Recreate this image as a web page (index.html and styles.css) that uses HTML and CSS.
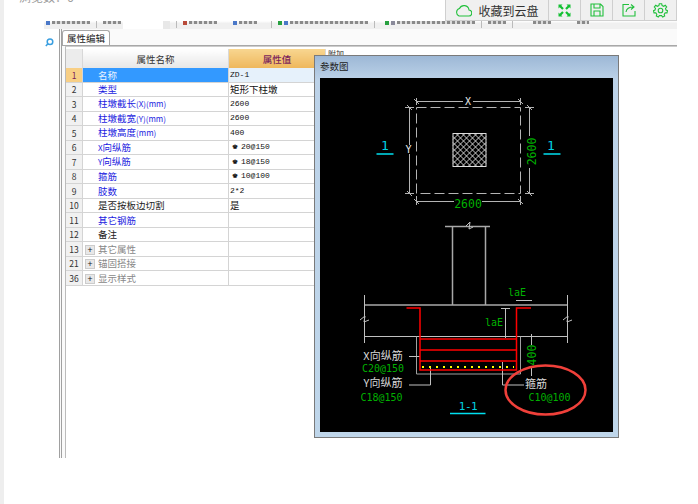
FILE: index.html
```html
<!DOCTYPE html>
<html lang="zh-CN">
<head>
    <meta charset="UTF-8">
    <title>属性编辑</title>
    <link rel="stylesheet" href="styles.css">
</head>
<body>
    <div class="strip"></div>
    <div class="page">
        <div class="views">浏览数：6</div>

        <div class="shot">
            <div class="toolbar">
                <i class="tb-icon blue"></i><span class="tb-text w1"></span>
                <i class="tb-sep"></i><span class="tb-text w2"></span>
                <span class="tb-input"></span><span class="tb-drop"></span>
                <i class="tb-sep"></i><i class="tb-icon red"></i><span class="tb-text w3"></span>
                <i class="tb-icon blue m1"></i><span class="tb-text w2"></span>
                <i class="tb-sep m2"></i><i class="tb-icon green"></i><i class="tb-icon blue"></i><span class="tb-text w4"></span>
                <i class="tb-sep"></i><i class="tb-icon green m3"></i><i class="tb-icon gray"></i><span class="tb-text w4"></span>
                <i class="tb-sep"></i><span class="tb-text w2"></span>
                <i class="tb-sep"></i><span class="tb-text w2 m4"></span><span class="tb-text w5 m5"></span>
            </div>
            <div class="work">
                <div class="side">
                    <svg class="search" width="9" height="9" viewBox="0 0 9 9">
                        <circle cx="5" cy="3.7" r="2.8" fill="none" stroke="#3a9fe0" stroke-width="1.5"/>
                        <path d="M3 5.8 L0.8 8" stroke="#3a9fe0" stroke-width="1.6"/>
                    </svg>
                </div>
                <div class="panel">
                    <div class="tabs"><div class="tab">属性编辑</div></div>
                    <div class="grid-wrap">
                        <table class="grid">
                            <thead>
                                <tr><th class="no"></th><th class="name">属性名称</th><th class="val">属性值</th><th class="extra">附加</th></tr>
                            </thead>
                            <tbody>
                                <tr class="sel"><td class="no">1</td><td class="name">名称</td><td class="val">ZD-1</td><td></td></tr>
                                <tr><td class="no">2</td><td class="name blue">类型</td><td class="val cn">矩形下柱墩</td><td></td></tr>
                                <tr><td class="no">3</td><td class="name blue">柱墩截长<small>(X)(mm)</small></td><td class="val">2600</td><td></td></tr>
                                <tr><td class="no">4</td><td class="name blue">柱墩截宽<small>(Y)(mm)</small></td><td class="val">2600</td><td></td></tr>
                                <tr><td class="no">5</td><td class="name blue">柱墩高度<small>(mm)</small></td><td class="val">400</td><td></td></tr>
                                <tr><td class="no">6</td><td class="name blue"><small>X</small>向纵筋</td><td class="val"><b class="steel">♚</b>20@150</td><td></td></tr>
                                <tr><td class="no">7</td><td class="name blue"><small>Y</small>向纵筋</td><td class="val"><b class="steel">♚</b>18@150</td><td></td></tr>
                                <tr><td class="no">8</td><td class="name blue">箍筋</td><td class="val"><b class="steel">♚</b>10@100</td><td></td></tr>
                                <tr><td class="no">9</td><td class="name blue">肢数</td><td class="val">2*2</td><td></td></tr>
                                <tr><td class="no">10</td><td class="name">是否按板边切割</td><td class="val cn">是</td><td></td></tr>
                                <tr><td class="no">11</td><td class="name blue">其它钢筋</td><td class="val"></td><td></td></tr>
                                <tr><td class="no">12</td><td class="name">备注</td><td class="val"></td><td></td></tr>
                                <tr><td class="no">13</td><td class="name gray"><i class="plus">+</i>其它属性</td><td class="val"></td><td></td></tr>
                                <tr><td class="no">21</td><td class="name gray"><i class="plus">+</i>锚固搭接</td><td class="val"></td><td></td></tr>
                                <tr><td class="no">36</td><td class="name gray"><i class="plus">+</i>显示样式</td><td class="val"></td><td></td></tr>
                            </tbody>
                        </table>
                    </div>
                </div>
            </div>

            <div class="dialog">
                <div class="dialog-title">参数图</div>
                <svg class="drawing" width="293" height="354" viewBox="320 78 293 354">
                    <!-- plan -->
                    <g fill="none" stroke="#b4b4b4">
                        <rect x="416.5" y="107.5" width="104" height="86" stroke-dasharray="10 4"/>
                        <path d="M416.5 98 V105 M520.5 98 V105 M416.5 101.5 H520.5"/>
                        <path d="M405 107.5 H414 M405 193.5 H414 M409.5 107.5 V193.5"/>
                        <path d="M525 107.5 H534 M525 193.5 H534 M529.5 107.5 V136 M529.5 168 V193.5"/>
                        <path d="M416.5 196 V205 M520.5 196 V205 M416.5 201.5 H454 M482 201.5 H520.5"/>
                        <path d="M414 99 L419 104 M518 99 L523 104 M407 105 L412 110 M407 191 L412 196 M527 105 L532 110 M527 191 L532 196 M414 199 L419 204 M518 199 L523 204"/>
                    </g>
                    <g fill="#000" stroke="none">
                        <rect x="463" y="97" width="10" height="9"/>
                        <rect x="404" y="145" width="10" height="9"/>
                    </g>
                    <rect x="453" y="133.500" width="33" height="33" fill="#000" stroke="#ddd"/>
                    <path class="hatch" d="M453 139.500 L459 133.500 M453 145.500 L465 133.500 M453 151.500 L471 133.500 M453 157.500 L477 133.500 M453 163.500 L483 133.500 M456 166.500 L486 136.500 M462 166.500 L486 142.500 M468 166.500 L486 148.500 M474 166.500 L486 154.500 M480 166.500 L486 160.500 M459 166.500 L453 160.500 M465 166.500 L453 154.500 M471 166.500 L453 148.500 M477 166.500 L453 142.500 M483 166.500 L453 136.500 M486 163.500 L456 133.500 M486 157.500 L462 133.500 M486 151.500 L468 133.500 M486 145.500 L474 133.500 M486 139.500 L480 133.500"/>
                    <text class="dim white" x="468" y="105" text-anchor="middle">X</text>
                    <text class="dim white" x="408.500" y="153" text-anchor="middle">Y</text>
                    <text class="dim green mid" x="468" y="207.500" text-anchor="middle">2600</text>
                    <text class="dim green mid" transform="translate(535.500 151.500) rotate(-90)" text-anchor="middle">2600</text>
                    <text class="dim cyan big" x="385" y="150" text-anchor="middle">1</text>
                    <text class="dim cyan big" x="551" y="150" text-anchor="middle">1</text>
                    <path d="M376.500 154 H393.500 M543.500 154 H560.500" stroke="#00e0f0" stroke-width="1.500"/>

                    <!-- section -->
                    <g fill="none" stroke="#a8a8a8" stroke-width="1.500">
                        <path d="M445 226.500 H490 M452.500 226.500 V305 M485.500 226.500 V305"/>
                        <path d="M364.500 305 H567.500"/>
                    </g>
                    <g fill="none" stroke="#c0c0c0">
                        <path d="M364.500 295 V343 M567.500 295 V343"/>
                        <path d="M360 320 L365 316 L364 322 L369 320 M563 320 L568 316 L567 322 L572 320 M466 226 L470 222 L469 229 L473 227"/>
                        <path d="M364.500 336.500 H567.500"/>
                        <path d="M416.500 336.500 V374 H520.500 V336.500" stroke="#a0a0a0"/>
                        <path d="M409 356.500 H420 M409 385 H430.500 V368 M502.500 362 V385 H524"/>
                        <path d="M516 300.500 H532 M505.500 308 V338 M501 308.500 H510 M531.500 334 V345 M531.500 366 V376"/>
                    </g>
                    <g fill="none" stroke="#ff0000" stroke-width="1.500">
                        <path d="M406.500 308 H420 V370 H516.500 V308 H531"/>
                        <path d="M420 339 H516.500 M420 350 H516.500 M420 361 H516.500"/>
                    </g>
                    <path d="M422 367 H514" stroke="#ffff00" stroke-width="2" stroke-dasharray="2 5"/>

                    <text class="label" x="383" y="360" text-anchor="middle">X向纵筋</text>
                    <text class="dim green" x="383" y="372" text-anchor="middle">C20@150</text>
                    <text class="label" x="383" y="387" text-anchor="middle">Y向纵筋</text>
                    <text class="dim green" x="381.500" y="401" text-anchor="middle">C18@150</text>
                    <text class="dim cyan tight" x="468" y="410" text-anchor="middle">1-1</text>
                    <path d="M450 413.500 H485.500" stroke="#00e0f0" stroke-width="1.500"/>
                    <text class="label" x="536" y="388" text-anchor="middle">箍筋</text>
                    <text class="dim green" x="549.500" y="401" text-anchor="middle">C10@100</text>
                    <text class="dim green" x="517" y="296" text-anchor="middle">laE</text>
                    <text class="dim green" x="494" y="326" text-anchor="middle">laE</text>
                    <text class="dim green mid" transform="translate(535.500 355) rotate(-90)" text-anchor="middle">400</text>
                    <ellipse cx="545.500" cy="390" rx="40" ry="24.500" fill="none" stroke="#f0403a" stroke-width="2.500"/>
                </svg>
            </div>
        </div>

        <div class="actions">
            <button class="act act-wide">
                <svg width="17" height="13" viewBox="0 0 17 13"><path d="M4 12 H13.500 A3 3 0 0 0 14 6 A5 5 0 0 0 4.500 4.500 A4 4 0 0 0 4 12 Z" fill="none" stroke="#22c03c" stroke-width="1.100"/></svg>
                收藏到云盘
            </button>
            <button class="act">
                <svg width="13" height="13" viewBox="0 0 13 13"><path d="M0.500 0.500 H4.500 L3.300 1.700 L5.800 4.200 L4.200 5.800 L1.700 3.300 L0.500 4.500 Z M12.500 0.500 V4.500 L11.300 3.300 L8.800 5.800 L7.200 4.200 L9.700 1.700 L8.500 0.500 Z M0.500 12.500 V8.500 L1.700 9.700 L4.200 7.200 L5.800 8.800 L3.300 11.300 L4.500 12.500 Z M12.500 12.500 H8.500 L9.700 11.300 L7.200 8.800 L8.800 7.200 L11.300 9.700 L12.500 8.500 Z" fill="#12c032"/></svg>
            </button>
            <button class="act">
                <svg width="14" height="14" viewBox="0 0 14 14"><path d="M1 1 H10.500 L13 3.500 V13 H1 Z M4 1 V5 H10 V1 M4 13 V8 H10 V13" fill="none" stroke="#22c03c" stroke-width="1.100"/></svg>
            </button>
            <button class="act">
                <svg width="14" height="14" viewBox="0 0 14 14"><path d="M7 1.500 H1 V13 H13 V8 M4 9 C4.500 5.500 7 4 11.500 4 M9 1.500 L12 4 L9 6.500" fill="none" stroke="#22c03c" stroke-width="1.100"/></svg>
            </button>
            <button class="act">
                <svg width="15" height="15" viewBox="0 0 15 15"><circle cx="7.500" cy="7.500" r="2.300" fill="none" stroke="#22c03c" stroke-width="1.100"/><path d="M6.300 0.800 H8.700 L9.100 2.600 L10.700 3.300 L12.300 2.300 L13.700 4 L12.500 5.400 L13 7 L14.500 7.700 L14 9.900 L12.200 9.900 L11.200 11.300 L11.700 13 L9.700 14 L8.600 12.600 H6.400 L5.300 14 L3.300 13 L3.800 11.300 L2.800 9.900 L1 9.900 L0.500 7.700 L2 7 L2.500 5.400 L1.300 4 L2.700 2.300 L4.300 3.300 L5.900 2.600 Z" fill="none" stroke="#22c03c" stroke-width="1.100"/></svg>
            </button>
        </div>
    </div>
</body>
</html>
```

FILE: styles.css
```css
body {
    margin: 0;
    background: white;
    font-family: "Noto Sans CJK SC", "Liberation Sans", sans-serif;
    display: flex;
    height: 504px;
    overflow: hidden;
}
.strip {
    width: 4px;
    background: #eeeeee;
}
.page {
    position: relative;
    flex: 1;
}
.views {
    height: 26px;
    margin-left: 15px;
    margin-top: -12px;
    font-size: 12px;
    color: #999;
    line-height: 18px;
}

/* 截图部分 */
.shot {
    position: relative;
    width: 633px;
    height: 437px;
    margin-top: 7px;
    margin-left: 40px;
    display: flex;
    flex-direction: column;
}
.toolbar {
    height: 8px;
    overflow: hidden;
    background: linear-gradient(white 0, #f0f0f0 30%, #f0f0f0 100%);
    display: flex;
    align-items: flex-start;
    gap: 2px;
    padding-left: 2px;
    filter: blur(0.6px);
}
.tb-text {
    height: 3px;
    overflow: hidden;
    background: repeating-linear-gradient(90deg, #8a8a8a 0, #8a8a8a 3px, #dcdcdc 3px, #dcdcdc 5px);
    flex: none;
}
.w1 { width: 38px; }
.w2 { width: 18px; }
.w3 { width: 28px; }
.w4 { width: 78px; }
.w5 { width: 12px; }
.tb-icon {
    width: 4px;
    height: 4px;
    flex: none;
}
.tb-icon.blue { background: #4a78c8; }
.tb-icon.red { background: #b84a3a; }
.tb-icon.green { background: #28a040; }
.tb-icon.gray { background: #8a8a9a; }
.tb-sep {
    width: 1px;
    height: 7px;
    margin: 0 4px;
    background: #bbb;
    flex: none;
}
.tb-input {
    width: 40px;
    height: 8px;
    background: white;
    flex: none;
}
.tb-drop {
    width: 7px;
    height: 8px;
    margin-left: -2px;
    background: #e8e8e8;
    flex: none;
}
.m1 { margin-left: 14px; }
.m2 { margin-left: 12px; }
.m3 { margin-left: 4px; }
.m4 { margin-left: 14px; }
.m5 { margin-left: 24px; }
.work {
    flex: 1;
    display: flex;
    min-height: 0;
}
.side {
    width: 15px;
    padding-top: 9px;
    box-sizing: border-box;
    padding-left: 1px;
}
.search {
    display: block;
}
.panel {
    flex: 1;
    display: flex;
    flex-direction: column;
    background: #fafafa;
    border-left: 3px double #a0a0a0;
    padding-top: 1px;
}
.tabs {
    height: 15px;
    border-bottom: 1px solid #a8a8a8;
}
.tab {
    width: 48px;
    height: 15px;
    box-sizing: border-box;
    background: white;
    border: 1px solid #a8a8a8;
    border-bottom: none;
    border-radius: 3px 3px 0 0;
    font-size: 9.500px;
    line-height: 15px;
    text-align: center;
    color: #222;
}
.grid-wrap {
    flex: 1;
    background: white;
    border-left: 1px solid #bbb;
    margin-left: 3px;
    border-top: 1px solid #ccc;
    padding-top: 2px;
}
.grid {
    border-collapse: collapse;
    table-layout: fixed;
    width: 300px;
    font-size: 9.500px;
}
.grid th {
    height: 19px;
    padding: 0;
    font-weight: normal;
    background: linear-gradient(#ffffff, #e6e6e6);
    border-right: 1px solid #d8d8d8;
    color: #333;
}
.grid th.no { width: 16px; background: #ececec; }
.grid th.name { width: 145px; }
.grid th.val {
    width: 96px;
    background: linear-gradient(#f8d690, #eeb75c);
    color: #7a1f5c;
    font-weight: 500;
}
.grid th.extra {
    background: white;
    font-size: 8px;
    text-align: left;
    border: none;
    vertical-align: top;
    line-height: 9px;
    padding-left: 2px;
}
.grid td {
    height: 13.500px;
    padding: 0;
    line-height: 12px;
    border-bottom: 1px solid #d4d4d4;
    border-right: 1px solid #d4d4d4;
    white-space: nowrap;
    overflow: hidden;
    color: #222;
}
.grid td.no {
    text-align: center;
    background: #f1f1f1;
    font-size: 8.500px;
    color: #333;
}
.grid td.name { padding-left: 15px; }
.grid td.name small {
    font-size: 8px;
}
.grid td.val {
    padding-left: 1px;
    font-family: "Liberation Mono", monospace;
    font-size: 8px;
    color: #111;
}
.grid td.cn {
    font-family: "Noto Sans CJK SC", sans-serif;
    font-size: 9.500px;
}
.steel {
    display: inline-block;
    width: 9px;
    margin-left: 2px;
    font-weight: normal;
    font-size: 10px;
    line-height: 8px;
}
.grid td.blue { color: #1c1ce0; }
.grid td.gray { color: #888; padding-left: 2px; }
.plus {
    display: inline-block;
    width: 8px;
    height: 8px;
    line-height: 7px;
    margin-right: 3px;
    text-align: center;
    font-style: normal;
    font-size: 9px;
    background: #e8e8e8;
    border: 1px solid #ccc;
    color: #222;
}
.grid tr.sel td.no { background: #f8cf85; color: #7a1f5c; }
.grid tr.sel td.name { background: #3399ff; color: #eaf4ff; }
.grid tr.sel td.val { background: #e6f1fb; }

/* 参数图窗口 */
.dialog {
    position: absolute;
    left: 270px;
    top: 34px;
    width: 305px;
    height: 383px;
    box-sizing: border-box;
    background: linear-gradient(#9db8d6 0, #bcd2e8 24px, #bfd6ea 100%);
    border: 1px solid #7a7a7a;
    padding: 0 5px 5px;
    display: flex;
    flex-direction: column;
}
.dialog-title {
    height: 22px;
    line-height: 20px;
    font-size: 9.500px;
    color: #222;
}
.drawing {
    display: block;
    background: black;
}
.hatch {
    stroke: #e0e0e0;
    stroke-width: 0.900;
    fill: none;
}
.dim {
    font-family: "DejaVu Sans Mono", "Liberation Mono", monospace;
    font-size: 10px;
}
.mid { font-size: 11.500px; }
.big { font-size: 13px; }
.tight { font-size: 11px; letter-spacing: -0.500px; }
.white { fill: #e8e8e8; }
.green { fill: #00b000; }
.cyan { fill: #00d0e0; }
.label {
    font-size: 11px;
    fill: #d8d8d8;
}

/* 右上角按钮 */
.actions {
    position: absolute;
    top: 0;
    left: 441px;
    display: flex;
    height: 20px;
    background: #f0f0f0;
    border-left: 1px solid #cfcfcf;
    border-bottom: 1px solid #cfcfcf;
}
.act {
    width: 32px;
    height: 20px;
    padding: 0;
    border: none;
    border-right: 1px solid #cfcfcf;
    background: none;
    display: flex;
    align-items: center;
    justify-content: center;
    gap: 6px;
    font-family: inherit;
    font-size: 12px;
    color: #333;
}
.act-wide { width: 103px; }
```
